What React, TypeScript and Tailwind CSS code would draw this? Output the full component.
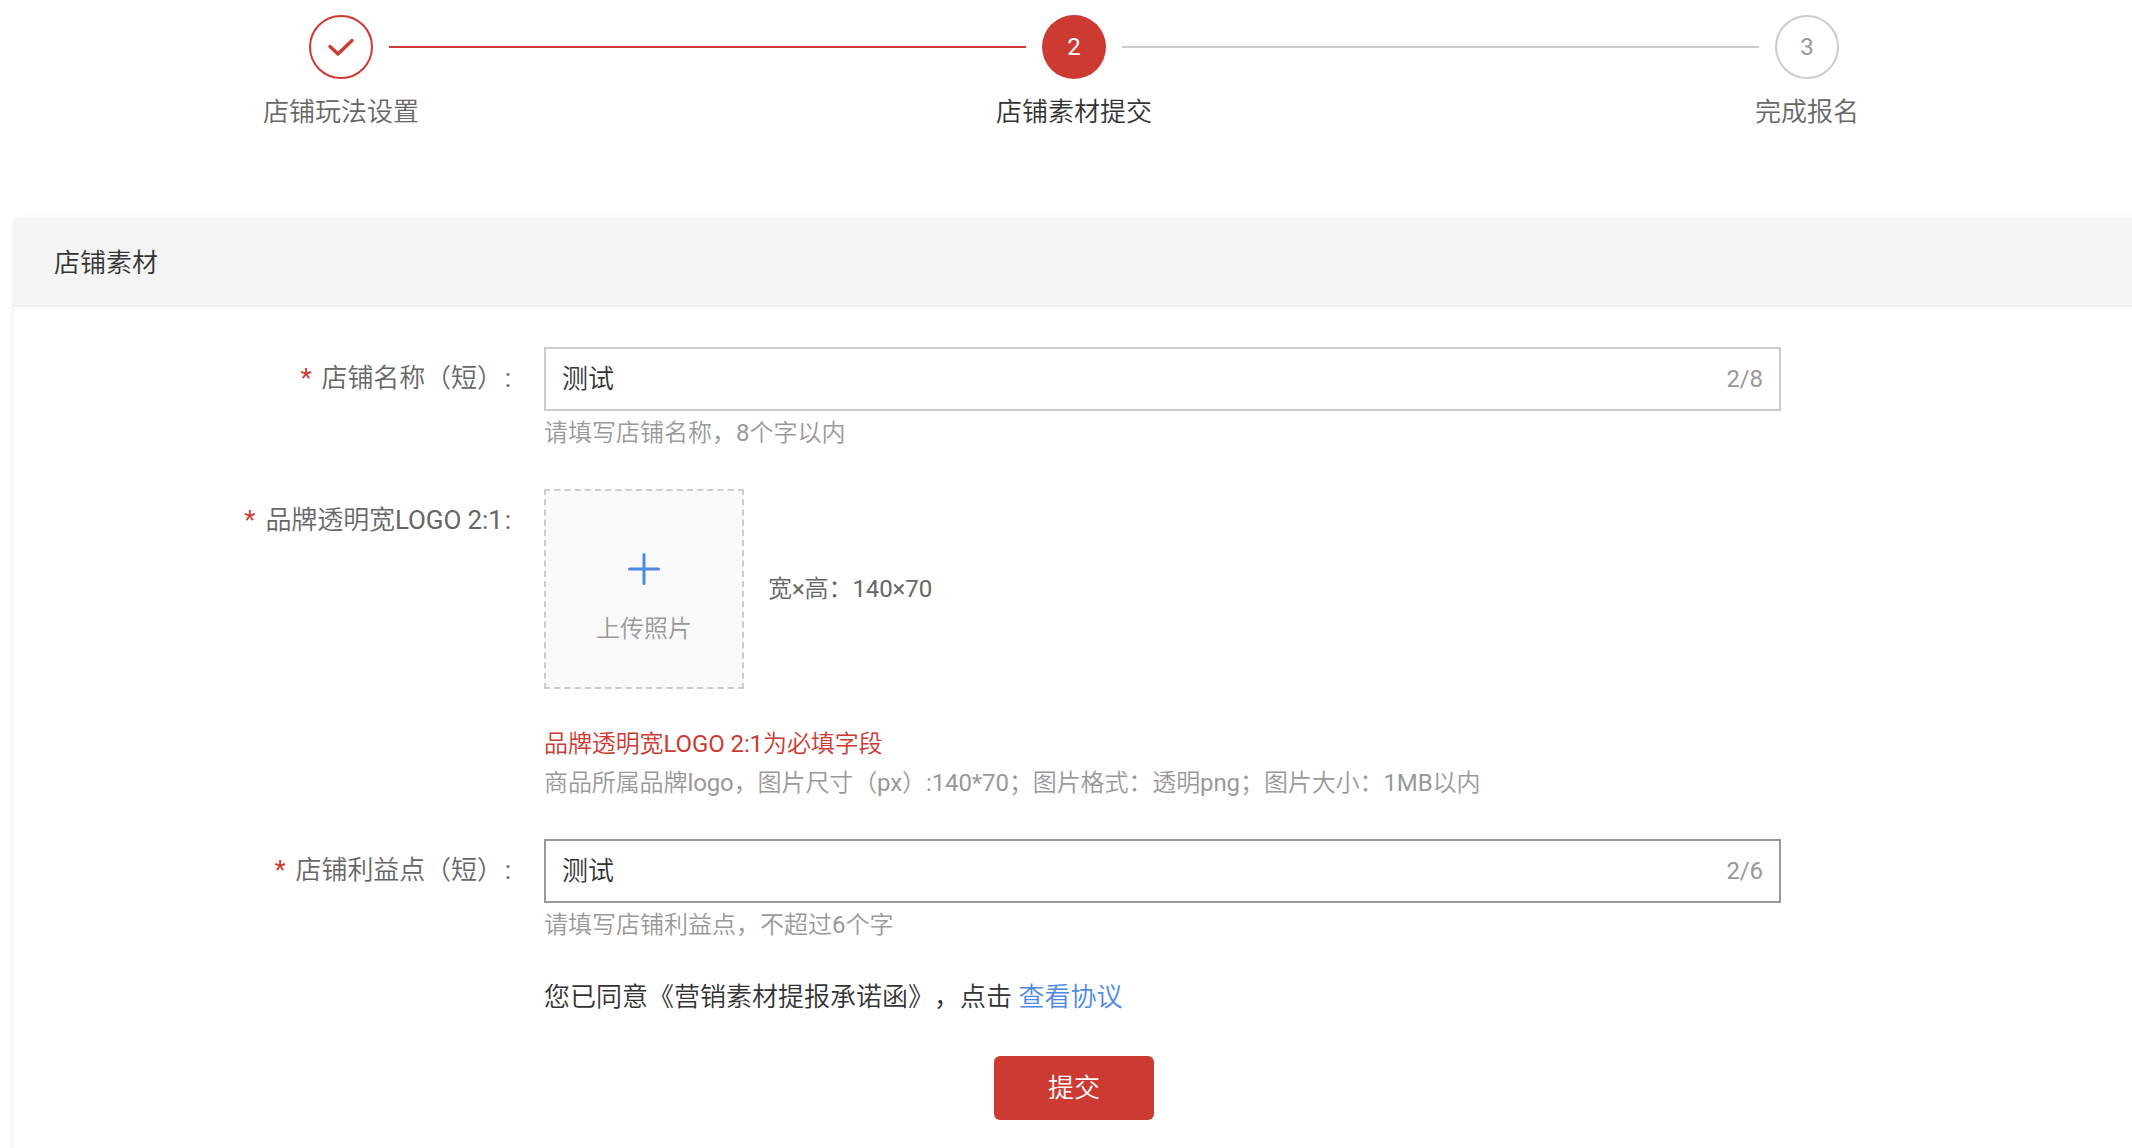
import React from "react";

const FONT = "font-[Roboto,'Noto_Sans_CJK_SC_DemiLight','Noto_Sans_CJK_SC',sans-serif]";

const Check: React.FC = () => (
  <svg width="28" height="20" viewBox="0 0 28 20" fill="none">
    <path d="M3 9.5 L11 17 L25 3.5" stroke="#cc3a31" strokeWidth="3.4" strokeLinecap="round" strokeLinejoin="round" />
  </svg>
);

interface StepProps {
  title: string;
  circle: string;
  text: string;
  children: React.ReactNode;
}

const Step: React.FC<StepProps> = ({ title, circle, text, children }) => (
  <div className="flex w-24 flex-col items-center">
    <div className={`flex h-16 w-16 items-center justify-center rounded-full text-2xl ${circle}`}>{children}</div>
    <p className={`mt-[13px] whitespace-nowrap leading-10 ${text}`}>{title}</p>
  </div>
);

interface RowProps {
  label: string;
  className?: string;
  children: React.ReactNode;
}

const Row: React.FC<RowProps> = ({ label, className, children }) => (
  <div className={`flex ${className ?? ""}`}>
    <label className="w-[530px] shrink-0 pr-[33px] text-right leading-[62px] tracking-[-0.1px] text-[#666]">
      <span className="mr-[10px] text-[#cc3a31]">*</span>
      {label}
      <span className="ml-[2px]">:</span>
    </label>
    <div className="w-[1237px]">{children}</div>
  </div>
);

interface FieldProps {
  count: string;
  border: string;
  help: string;
}

const Field: React.FC<FieldProps> = ({ count, border, help }) => (
  <>
    <div className={`flex h-16 items-center border-2 px-4 ${border}`}>
      <input className="min-w-0 flex-1 text-[#333] outline-none" defaultValue="测试" />
      <span className="text-2xl tracking-[-0.1px] text-[#999]">{count}</span>
    </div>
    <p className="mt-1 text-2xl leading-9 text-[#999]">{help}</p>
  </>
);

const App: React.FC = () => {
  return (
    <div
      className={`h-[1148px] overflow-hidden bg-white text-[26px] font-normal text-[#333] [text-spacing-trim:space-all] ${FONT}`}
    >
      <div className="flex pl-[293px] pt-[15px]">
        <Step title="店铺玩法设置" circle="border-2 border-[#cc3a31]" text="text-[#666]">
          <Check />
        </Step>
        <div className="mt-[31px] h-[2px] w-[637px] bg-[#cc3a31]"></div>
        <Step title="店铺素材提交" circle="bg-[#cc3a31] text-white" text="text-[#333]">
          2
        </Step>
        <div className="mt-[31px] h-[2px] w-[637px] bg-[#ccc]"></div>
        <Step title="完成报名" circle="border-2 border-[#ccc] text-[#999]" text="text-[#666]">
          3
        </Step>
      </div>

      <div className="ml-[14px] mt-[86px] h-[1000px] w-[2200px] rounded shadow-[0_2px_6px_rgba(0,0,0,0.1)]">
        <div className="flex h-[89px] items-center rounded-t border-b-2 border-[#ededed] bg-[#f4f4f4] px-10 pt-[3px]">
          店铺素材
        </div>

        <Row label="店铺名称（短）" className="mt-10">
          <Field count="2/8" border="border-[#ccc]" help="请填写店铺名称，8个字以内" />
        </Row>

        <Row label="品牌透明宽LOGO 2:1" className="mt-[38px]">
          <div className="flex items-center">
            <div className="flex h-[200px] w-[200px] flex-col items-center border-2 border-dashed border-[#ccc] bg-[#f9f9f9] pt-[62px]">
              <svg width="32" height="32" viewBox="0 0 32 32">
                <path d="M16 1.5V30.5M1.5 16H30.5" stroke="#4d89e5" strokeWidth="3" strokeLinecap="round" />
              </svg>
              <span className="mt-[26px] text-2xl leading-9 text-[#999]">上传照片</span>
            </div>
            <span className="ml-6 text-2xl tracking-[-0.1px] text-[#666]">宽×高：140×70</span>
          </div>
          <p className="mt-[37px] text-2xl leading-9 tracking-[-0.1px] text-[#cc3a31]">品牌透明宽LOGO 2:1为必填字段</p>
          <p className="mt-[3px] text-2xl leading-9 tracking-[-0.1px] text-[#999]">
            商品所属品牌logo，图片尺寸（px）:140*70；图片格式：透明png；图片大小：1MB以内
          </p>
        </Row>

        <Row label="店铺利益点（短）" className="mt-[38px]">
          <Field count="2/6" border="border-[#999]" help="请填写店铺利益点，不超过6个字" />
        </Row>

        <p className="ml-[530px] mt-[34px] leading-10">
          您已同意《营销素材提报承诺函》，点击 <a className="text-[#4d89e5]">查看协议</a>
        </p>
        <button className="ml-[980px] mt-[39px] h-16 w-40 rounded-md bg-[#cc3a31] text-white">提交</button>
      </div>
    </div>
  );
};

export default App;
